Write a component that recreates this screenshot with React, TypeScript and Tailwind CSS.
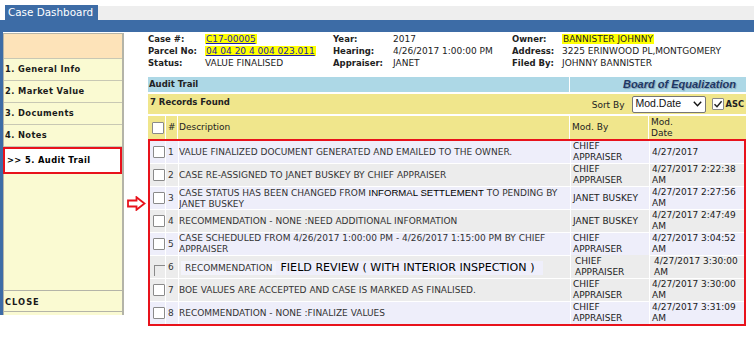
import React from 'react';

const Check = ({ checked = false, partial = false }: { checked?: boolean; partial?: boolean }) => (
  <span
    className={
      partial
        ? 'block w-[11px] h-[11px] border-t border-l border-[#8a8a8a] bg-transparent'
        : 'flex items-center justify-center w-[12px] h-[12px] border border-[#8a8a8a] bg-white rounded-[1px]'
    }
  >
    {checked && (
      <svg width="10" height="10" viewBox="0 0 10 10">
        <path d="M1.5 5.2 L4 7.8 L8.6 2.2" stroke="#222" strokeWidth="1.4" fill="none" />
      </svg>
    )}
  </span>
);

type Row = { desc: React.ReactNode; by: React.ReactNode; date: React.ReactNode; bg: string; special?: boolean };

const rows: Row[] = [
  { desc: 'VALUE FINALIZED DOCUMENT GENERATED AND EMAILED TO THE OWNER.', by: <>CHIEF<br />APPRAISER</>, date: '4/27/2017', bg: 'bg-[#eeeefa]' },
  { desc: 'CASE RE-ASSIGNED TO JANET BUSKEY BY CHIEF APPRAISER', by: <>CHIEF<br />APPRAISER</>, date: <>4/27/2017 2:22:38<br />AM</>, bg: 'bg-[#ececec]' },
  {
    desc: (
      <>
        CASE STATUS HAS BEEN CHANGED FROM{' '}
        <span className="font-['Liberation_Sans',sans-serif] text-[9.6px] text-black">INFORMAL SETTLEMENT</span> TO PENDING BY
        <br />
        JANET BUSKEY
      </>
    ),
    by: 'JANET BUSKEY',
    date: <>4/27/2017 2:27:56<br />AM</>,
    bg: 'bg-[#eeeefa]',
  },
  { desc: 'RECOMMENDATION - NONE :NEED ADDITIONAL INFORMATION', by: 'JANET BUSKEY', date: <>4/27/2017 2:47:49<br />AM</>, bg: 'bg-[#ececec]' },
  {
    desc: <>CASE SCHEDULED FROM 4/26/2017 1:00:00 PM - 4/26/2017 1:15:00 PM BY CHIEF<br />APPRAISER</>,
    by: <>CHIEF<br />APPRAISER</>,
    date: <>4/27/2017 3:04:52<br />AM</>,
    bg: 'bg-[#eeeefa]',
  },
  { desc: '', by: <>CHIEF<br />APPRAISER</>, date: <>4/27/2017 3:30:00<br />AM</>, bg: 'bg-[#ececec]', special: true },
  { desc: 'BOE VALUES ARE ACCEPTED AND CASE IS MARKED AS FINALISED.', by: <>CHIEF<br />APPRAISER</>, date: <>4/27/2017 3:30:00<br />AM</>, bg: 'bg-[#ececec]' },
  { desc: 'RECOMMENDATION - NONE :FINALIZE VALUES', by: <>CHIEF<br />APPRAISER</>, date: <>4/27/2017 3:31:09<br />AM</>, bg: 'bg-[#eeeefa]' },
];

const menu = ['1. General Info', '2. Market Value', '3. Documents', '4. Notes'];

const Label = ({ children }: { children: React.ReactNode }) => (
  <span className="font-bold text-[8.5px] whitespace-nowrap">{children}</span>
);

export default function App() {
  return (
    <div className="w-[754px] h-[350px] bg-white overflow-hidden font-['DejaVu_Sans',sans-serif] text-[9px] text-[#222]">
      {/* tab strip */}
      <div className="flex items-end h-[20px]">
        <div className="ml-[5px] w-[93px] h-[15px] bg-[#3d6ca6] text-white text-[10.4px] leading-[15px] pl-[3px] whitespace-nowrap">
          Case Dashboard
        </div>
        <div className="flex-1 h-[14px] bg-[#eeeeee]" />
      </div>
      <div className="h-[12px] bg-[#3d6ca6]" />

      <div className="flex">
        <div className="w-[3px] h-[283px] bg-[#3d6ca6]" />

        {/* sidebar */}
        <div className="mt-[1px] w-[121px] h-[282px] flex flex-col bg-[#fafad2] border-t border-l border-r-2 border-[#b4b4a8] font-bold text-[8.3px] text-[#1a1a1a]">
          <div className="h-[25px] bg-[#fde3b9] border-b border-[#c8c8b4]" />
          {menu.map((m) => (
            <div key={m} className="h-[22px] flex items-center pl-[1px] border-b border-[#c8c8b4] tracking-[0.4px]">
              {m}
            </div>
          ))}
          <div className="h-[27px] -ml-[1px] flex items-center pl-[2px] bg-white border-2 border-[#e8121b] text-black tracking-[0.4px]">
            &gt;&gt; 5. Audit Trail
          </div>
          <div className="h-[116px]" />
          <div className="h-[22px] flex items-center pl-[1px] pt-[2px] border-y border-[#b4b4a8] tracking-[1px]">CLOSE</div>
        </div>

        {/* arrow */}
        <div className="w-[24px] pt-[164px] pl-[3px]">
          <svg width="19" height="15" viewBox="0 0 19 15">
            <path d="M1 4.5 H9.5 V1.2 L17.5 7.5 L9.5 13.8 V10.5 H1 Z" fill="white" stroke="#e8121b" strokeWidth="1.8" strokeLinejoin="miter" />
          </svg>
        </div>

        {/* main */}
        <div className="w-[598px] flex flex-col">
          {/* case info */}
          <div className="h-[45px] pt-[1px] grid grid-cols-[57px_128px_60px_119px_50px_1fr] auto-rows-[12px] items-center leading-[12px]">
            <Label>Case #:</Label>
            <span><span className="bg-[#ffff00] text-[#1c1ca8] underline px-[1px]">C17-00005</span></span>
            <Label>Year:</Label>
            <span>2017</span>
            <Label>Owner:</Label>
            <span className="whitespace-nowrap"><span className="bg-[#ffff00] px-[1px]">BANNISTER JOHNNY</span></span>

            <Label>Parcel No:</Label>
            <span className="whitespace-nowrap"><span className="bg-[#ffff00] text-[#1c1ca8] underline px-[1px]">04 04 20 4 004 023.011</span></span>
            <Label>Hearing:</Label>
            <span className="whitespace-nowrap">4/26/2017 1:00:00 PM</span>
            <Label>Address:</Label>
            <span className="whitespace-nowrap">3225 ERINWOOD PL,MONTGOMERY</span>

            <Label>Status:</Label>
            <span className="whitespace-nowrap">VALUE FINALISED</span>
            <Label>Appraiser:</Label>
            <span>JANET</span>
            <Label>Filed By:</Label>
            <span className="whitespace-nowrap">JOHNNY BANNISTER</span>
          </div>

          {/* audit trail bar */}
          <div className="flex gap-px h-[15px]">
            <div className="w-[421px] bg-[#add8e6] font-bold text-[8.5px] leading-[15px] pl-[1px]">Audit Trail</div>
            <div className="flex-1 bg-[#add8e6] text-right pr-[10px] font-['Liberation_Sans',sans-serif] font-bold italic text-[11px] leading-[15px] text-[#1f3864] [text-shadow:1px_1px_1px_#7f9fb8]">
              Board of Equalization
            </div>
          </div>

          {/* records bar */}
          <div className="mt-[2px] h-[20px] bg-[#f0e68c] flex items-center justify-between pl-[2px] pr-[2px]">
            <span className="font-bold text-[8.5px] -mt-[3px]">7 Records Found</span>
            <div className="flex items-center">
              <span className="mr-[7px] mt-[3px]">Sort By</span>
              <div className="w-[74px] h-[17px] bg-white border border-[#767676] rounded-[2px] flex items-center justify-between pl-[3px] pr-[3px] font-['Liberation_Sans',sans-serif] text-[10.5px] text-[#111]">
                Mod.Date
                <svg width="9" height="6" viewBox="0 0 9 6">
                  <path d="M0.8 0.8 L4.5 4.8 L8.2 0.8" stroke="#111" strokeWidth="1.4" fill="none" />
                </svg>
              </div>
              <span className="ml-[6px] mr-[2px]"><Check checked /></span>
              <span className="font-bold text-[8.3px]">ASC</span>
            </div>
          </div>

          {/* header row */}
          <div className="mt-[2px] h-[23px] grid grid-cols-[17px_11px_391px_78px_1fr] gap-x-px">
            <div className="bg-[#f0e68c] flex items-center justify-end pr-[1px]"><Check /></div>
            <div className="bg-[#f0e68c] flex items-center pl-[2px]">#</div>
            <div className="bg-[#f0e68c] flex items-center pl-[1px]">Description</div>
            <div className="bg-[#f0e68c] flex items-center pl-[2px]">Mod. By</div>
            <div className="bg-[#f0e68c] flex items-center pl-[2px] leading-[11px]">Mod.<br />Date</div>
          </div>

          {/* rows */}
          <div className="border-2 border-[#e8121b] flex flex-col gap-y-px text-[#333] leading-[11px]">
            {rows.map((r, i) => (
              <div key={i} className="h-[22px] grid grid-cols-[15px_12px_391px_78px_1fr] gap-x-px">
                <div className={`${r.bg} flex items-center justify-end`}>
                  {r.special ? <span className="mt-[6px]"><Check partial /></span> : <Check />}
                </div>
                <div className={`${r.bg} flex items-center pl-[2px]`}>{i + 1}</div>
                <div className={`${r.bg} flex items-center whitespace-nowrap overflow-hidden`}>
                  {r.special ? (
                    <div className="flex items-center pl-[2px] pt-[2px]">
                      <span className="bg-[#f3f3fb] px-[4px] leading-[14px]">RECOMMENDATION</span>
                      <span className="bg-[#efeffb] pl-[4px] pr-[8px] leading-[14px] text-[11.1px] text-black">
                        FIELD REVIEW ( WITH INTERIOR INSPECTION )
                      </span>
                    </div>
                  ) : (
                    <span>{r.desc}</span>
                  )}
                </div>
                <div className={`${r.bg} flex items-center ${r.special ? 'pl-[4px] -mt-[1px]' : 'pl-[2px]'} text-[#222] whitespace-nowrap`}>{r.by}</div>
                <div className={`${r.bg} flex items-center ${r.special ? 'pl-[4px]' : 'pl-[2px]'} text-[#222] whitespace-nowrap overflow-hidden`}>{r.date}</div>
              </div>
            ))}
          </div>
        </div>
      </div>
    </div>
  );
}
